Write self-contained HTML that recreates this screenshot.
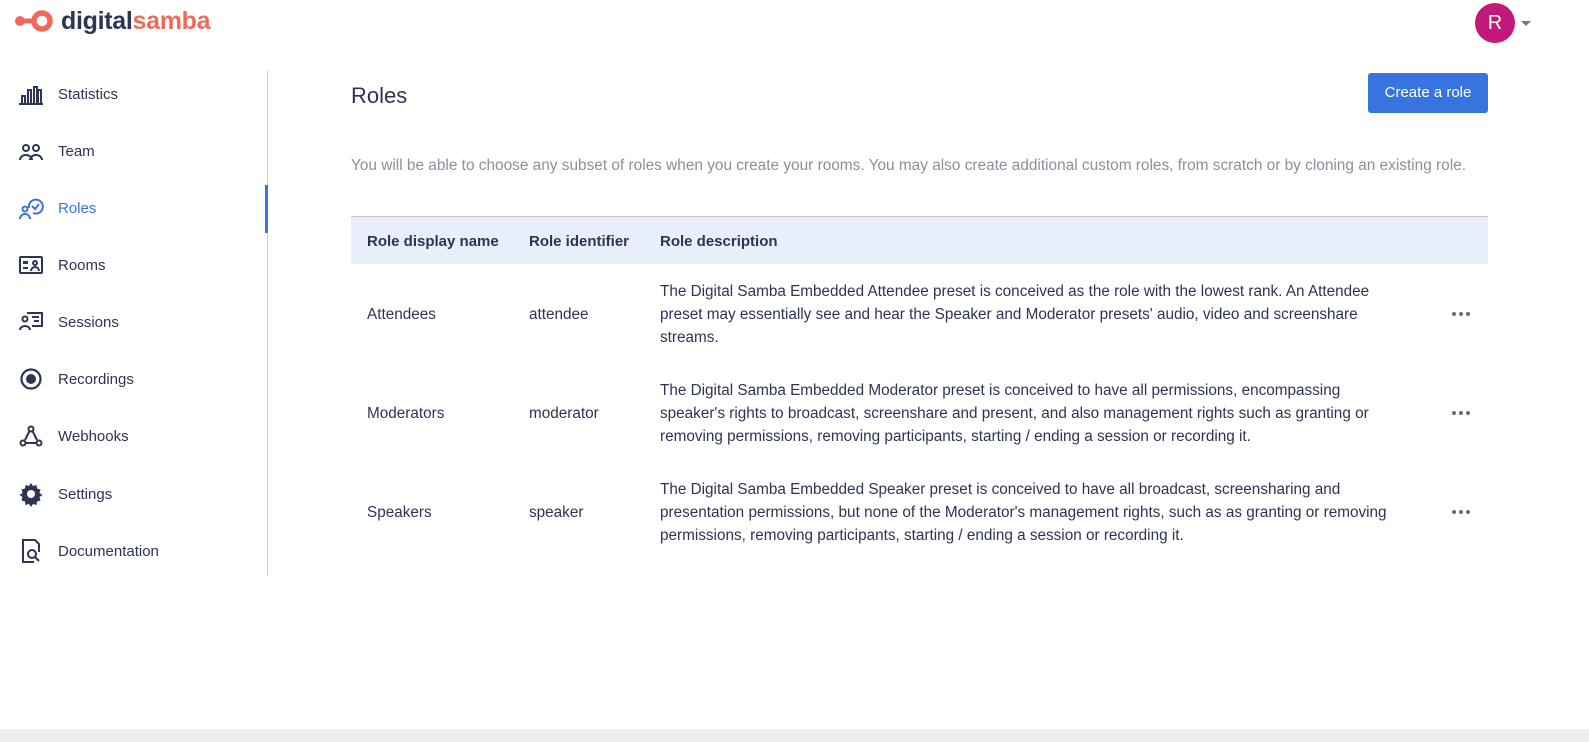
<!DOCTYPE html>
<html><head><meta charset="utf-8"><style>
*{margin:0;padding:0;box-sizing:border-box}
body{width:1589px;height:742px;background:#fff;font-family:"Liberation Sans",sans-serif;color:#2c3553;position:relative;overflow:hidden}
.a{position:absolute;white-space:nowrap}
.nav{position:absolute;left:18px;font-size:15px;display:flex;align-items:center}
.nav svg{width:26px;height:26px;margin-right:15px}
.nav span{position:absolute;left:40px}
.t{font-size:15.3px;line-height:23px}
.dots{position:absolute;left:1452px;width:18px;height:4px;display:flex;justify-content:space-between}
.dots i{width:4px;height:4px;border-radius:50%;background:#6b6b6b;display:block}
</style></head><body>
<svg class="a" style="left:14px;top:9px" width="40" height="24" viewBox="0 0 40 24"><circle cx="6" cy="12" r="5" fill="#ee6a5a"/><rect x="6" y="9.5" width="16" height="5" fill="#ee6a5a"/><circle cx="28" cy="12" r="8" fill="none" stroke="#ee6a5a" stroke-width="5.5"/></svg>
<div class="a" style="left:61px;top:7px;font-size:25px;font-weight:bold;letter-spacing:-0.3px"><span style="color:#2c3553">digital</span><span style="color:#ee6a5a">samba</span></div>
<div class="a" style="left:1475px;top:3px;width:40px;height:40px;border-radius:50%;background:#c2187a;color:#fff;font-size:20px;text-align:center;line-height:40px">R</div>
<div class="a" style="left:1521px;top:21px;width:0;height:0;border-left:5px solid transparent;border-right:5px solid transparent;border-top:5px solid #777"></div>
<div class="a" style="left:267px;top:71px;width:1px;height:505px;background:#d0d0d0"></div>
<div class="a" style="left:265px;top:185px;width:3px;height:48px;background:#3874e0"></div>

<div class="nav" style="top:81px"><svg viewBox="0 0 26 26" fill="none" stroke="#2c3553" stroke-width="2"><path d="M1 23h24M4 23v-8h3v8M10 23V9h3v14M16 23V6h3v17M20 23V9h3v14"/></svg><span>Statistics</span></div>
<div class="nav" style="top:138px"><svg viewBox="0 0 26 26" fill="none" stroke="#2c3553" stroke-width="2"><circle cx="8" cy="10" r="3"/><circle cx="18" cy="10" r="3"/><path d="M2 22a6 5 0 0 1 12 0M12 22a6 5 0 0 1 12 0"/></svg><span>Team</span></div>
<div class="nav" style="top:195px;color:#3874e0"><svg viewBox="0 0 26 26" fill="none" stroke="#3874e0" stroke-width="2"><circle cx="7" cy="14" r="2.5"/><path d="M2 24a5 5 0 0 1 10 0"/><path d="M11 13a7 7 0 1 1 4 5"/><path d="M14 11l3 3 4-5"/></svg><span>Roles</span></div>
<div class="nav" style="top:252px"><svg viewBox="0 0 26 26" fill="none" stroke="#2c3553" stroke-width="2"><rect x="2" y="5" width="22" height="16" rx="1"/><rect x="5" y="9" width="5" height="3" fill="#2c3553" stroke="none"/><path d="M5 16h5"/><circle cx="17" cy="11" r="2"/><path d="M13 19a4 4 0 0 1 8 0"/></svg><span>Rooms</span></div>
<div class="nav" style="top:309px"><svg viewBox="0 0 26 26" fill="none" stroke="#2c3553" stroke-width="2"><path d="M9 4h15v13H14"/><circle cx="7" cy="10" r="2.5"/><path d="M2 21a5 4 0 0 1 10 0"/><path d="M14 8h7M16 12h5"/></svg><span>Sessions</span></div>
<div class="nav" style="top:366px"><svg viewBox="0 0 26 26"><circle cx="13" cy="13" r="9.5" fill="none" stroke="#2c3553" stroke-width="2.2"/><circle cx="13" cy="13" r="5" fill="#2c3553"/></svg><span>Recordings</span></div>
<div class="nav" style="top:423px"><svg viewBox="0 0 26 26" fill="none" stroke="#2c3553" stroke-width="2"><circle cx="13" cy="6" r="2.5"/><circle cx="5" cy="20" r="2.5"/><circle cx="21" cy="20" r="2.5"/><path d="M11.5 8L7 17M14.5 8L19 17M7.5 20h11"/></svg><span>Webhooks</span></div>
<div class="nav" style="top:481px"><svg viewBox="0 0 26 26"><path d="M13 2l2 3 3.5-1 .5 3.5 3.5 1-1 3.5 3 2-3 2 1 3.5-3.5 1-.5 3.5-3.5-1-2 3-2-3-3.5 1-.5-3.5-3.5-1 1-3.5-3-2 3-2-1-3.5 3.5-1 .5-3.5 3.5 1z" fill="#2c3553"/><circle cx="13" cy="13" r="4" fill="#fff"/></svg><span>Settings</span></div>
<div class="nav" style="top:538px"><svg viewBox="0 0 26 26" fill="none" stroke="#2c3553" stroke-width="2"><path d="M16 24H5V2h12l4 4v8"/><circle cx="14" cy="16" r="4"/><path d="M17 19l4 4"/></svg><span>Documentation</span></div>

<div class="a" style="left:351px;top:83px;font-size:22px">Roles</div>
<div class="a" style="left:1368px;top:73px;width:120px;height:40px;background:#3874e0;border-radius:3px;color:#fff;font-size:15px;text-align:center;line-height:40px">Create a role</div>
<div class="a" style="left:351px;top:157px;font-size:15.4px;color:#8a8f9c">You will be able to choose any subset of roles when you create your rooms. You may also create additional custom roles, from scratch or by cloning an existing role.</div>

<div class="a" style="left:351px;top:216px;width:1137px;height:48px;background:#e8effb;border-top:1px solid #c8c8c8"></div>
<div class="a" style="left:367px;top:233px;font-size:15px;font-weight:bold">Role display name</div>
<div class="a" style="left:529px;top:233px;font-size:15px;font-weight:bold">Role identifier</div>
<div class="a" style="left:660px;top:233px;font-size:15px;font-weight:bold">Role description</div>

<div class="a t" style="left:367px;top:303px">Attendees</div>
<div class="a t" style="left:529px;top:303px">attendee</div>
<div class="a t" style="left:660px;top:280px">The Digital Samba Embedded Attendee preset is conceived as the role with the lowest rank. An Attendee<br>preset may essentially see and hear the Speaker and Moderator presets' audio, video and screenshare<br>streams.</div>
<div class="dots" style="top:312px"><i></i><i></i><i></i></div>

<div class="a t" style="left:367px;top:402px">Moderators</div>
<div class="a t" style="left:529px;top:402px">moderator</div>
<div class="a t" style="left:660px;top:379px">The Digital Samba Embedded Moderator preset is conceived to have all permissions, encompassing<br>speaker's rights to broadcast, screenshare and present, and also management rights such as granting or<br>removing permissions, removing participants, starting / ending a session or recording it.</div>
<div class="dots" style="top:411px"><i></i><i></i><i></i></div>

<div class="a t" style="left:367px;top:501px">Speakers</div>
<div class="a t" style="left:529px;top:501px">speaker</div>
<div class="a t" style="left:660px;top:478px">The Digital Samba Embedded Speaker preset is conceived to have all broadcast, screensharing and<br>presentation permissions, but none of the Moderator's management rights, such as as granting or removing<br>permissions, removing participants, starting / ending a session or recording it.</div>
<div class="dots" style="top:510px"><i></i><i></i><i></i></div>

<div class="a" style="left:0;top:729px;width:1589px;height:13px;background:#efefef"></div>
</body></html>
